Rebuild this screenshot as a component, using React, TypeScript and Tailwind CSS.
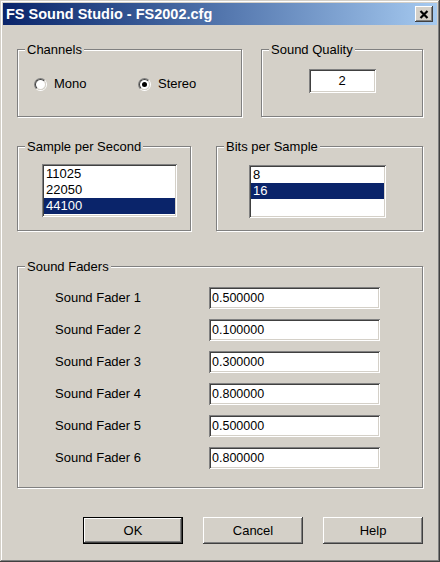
import React from "react";

const sunken =
  "shadow-[inset_1px_1px_0_#808080,inset_-1px_-1px_0_#ffffff,inset_2px_2px_0_#404040,inset_-2px_-2px_0_#d4d0c8]";
const raised =
  "shadow-[inset_-1px_-1px_0_#404040,inset_1px_1px_0_#ffffff,inset_-2px_-2px_0_#808080,inset_2px_2px_0_#d4d0c8]";

const GroupBox = ({
  label,
  className,
  children,
}: {
  label: string;
  className: string;
  children?: React.ReactNode;
}) => (
  <div
    className={`relative border border-[#808080] shadow-[1px_1px_0_#ffffff,inset_1px_1px_0_#ffffff] ${className}`}
  >
    <span className="absolute left-[7px] top-[-8px] bg-[#d4d0c8] px-[2px] leading-[16px]">
      {label}
    </span>
    {children}
  </div>
);

const Radio = ({ checked, label, className = "" }: { checked?: boolean; label: string; className?: string }) => (
  <div className={`flex items-center gap-[7px] ${className}`}>
    <span className="w-[13px] h-[13px] rounded-full border border-t-[#808080] border-l-[#808080] border-b-white border-r-white flex">
      <span className="flex-1 rounded-full border border-t-[#404040] border-l-[#404040] border-b-[#d4d0c8] border-r-[#d4d0c8] bg-white flex items-center justify-center">
        {checked && <span className="w-[5px] h-[5px] rounded-full bg-black" />}
      </span>
    </span>
    <span className="leading-[16px]">{label}</span>
  </div>
);

const ListBox = ({ items, selected, className }: { items: string[]; selected: number; className: string }) => (
  <div className={`bg-white p-[2px] ${sunken} ${className}`}>
    {items.map((it, i) => (
      <div
        key={it}
        className={`h-[16px] leading-[16px] pl-[2px] text-[13px] ${
          i === selected ? "bg-[#0a246a] text-white" : ""
        }`}
      >
        {it}
      </div>
    ))}
  </div>
);

const faders = ["0.500000", "0.100000", "0.300000", "0.800000", "0.500000", "0.800000"];

const Button = ({ label, isDefault }: { label: string; isDefault?: boolean }) => (
  <div
    className={`w-[100px] h-[27px] flex items-center justify-center ${
      isDefault ? "border border-black" : ""
    }`}
  >
    <div className={`w-full h-full flex items-center justify-center ${raised}`}>{label}</div>
  </div>
);

export default function App() {
  return (
    <div
      className={`w-[440px] h-[562px] bg-[#d4d0c8] p-[3px] flex flex-col text-[13px] text-black shadow-[inset_-1px_-1px_0_#404040,inset_1px_1px_0_#d4d0c8,inset_-2px_-2px_0_#808080,inset_2px_2px_0_#ffffff]`}
      style={{ fontFamily: '"Liberation Sans", Arial, sans-serif' }}
    >
      {/* Title bar */}
      <div className="h-[22px] flex items-center justify-between bg-gradient-to-r from-[#0a246a] to-[#a6caf0] pl-[3px] pr-[4px]">
        <span className="text-white font-bold text-[14.5px] leading-[22px]">FS Sound Studio - FS2002.cfg</span>
        <div className={`w-[18px] h-[16px] bg-[#d4d0c8] flex items-center justify-center ${raised}`}>
          <svg width="10" height="9" viewBox="0 0 10 9">
            <path d="M1.5 1 L8.5 8 M8.5 1 L1.5 8" stroke="#000" strokeWidth="2.2" />
          </svg>
        </div>
      </div>

      <div className="flex flex-col px-[14px]">
        {/* Row 1 */}
        <div className="flex justify-between mt-[24px]">
          <GroupBox label="Channels" className="w-[225px] h-[68px] pt-[26px] pl-[16px]">
            <div className="flex">
              <Radio label="Mono" className="w-[104px]" />
              <Radio label="Stereo" checked />
            </div>
          </GroupBox>
          <GroupBox label="Sound Quality" className="w-[162px] h-[68px] pt-[19px] flex justify-center items-start">
            <div className={`w-[67px] h-[24px] bg-white flex items-center justify-center ${sunken}`}>2</div>
          </GroupBox>
        </div>

        {/* Row 2 */}
        <div className="flex justify-between mt-[29px]">
          <GroupBox label="Sample per Second" className="w-[174px] h-[85px] pt-[17px] pl-[24px]">
            <ListBox items={["11025", "22050", "44100"]} selected={2} className="w-[135px] h-[53px]" />
          </GroupBox>
          <GroupBox label="Bits per Sample" className="w-[207px] h-[85px] pt-[18px] pl-[32px]">
            <ListBox items={["8", "16"]} selected={1} className="w-[137px] h-[53px]" />
          </GroupBox>
        </div>

        {/* Faders */}
        <GroupBox label="Sound Faders" className="mt-[35px] w-[406px] h-[222px] pt-[20px] pl-[37px]">
          <div className="flex flex-col gap-[10px]">
            {faders.map((v, i) => (
              <div key={i} className="flex items-center">
                <span className="w-[154px]">Sound Fader {i + 1}</span>
                <div className={`w-[171px] h-[22px] bg-white flex items-center pl-[3px] text-[12.5px] ${sunken}`}>{v}</div>
              </div>
            ))}
          </div>
        </GroupBox>

        {/* Buttons */}
        <div className="flex justify-end gap-[20px] mt-[29px]">
          <Button label="OK" isDefault />
          <Button label="Cancel" />
          <Button label="Help" />
        </div>
      </div>
    </div>
  );
}
